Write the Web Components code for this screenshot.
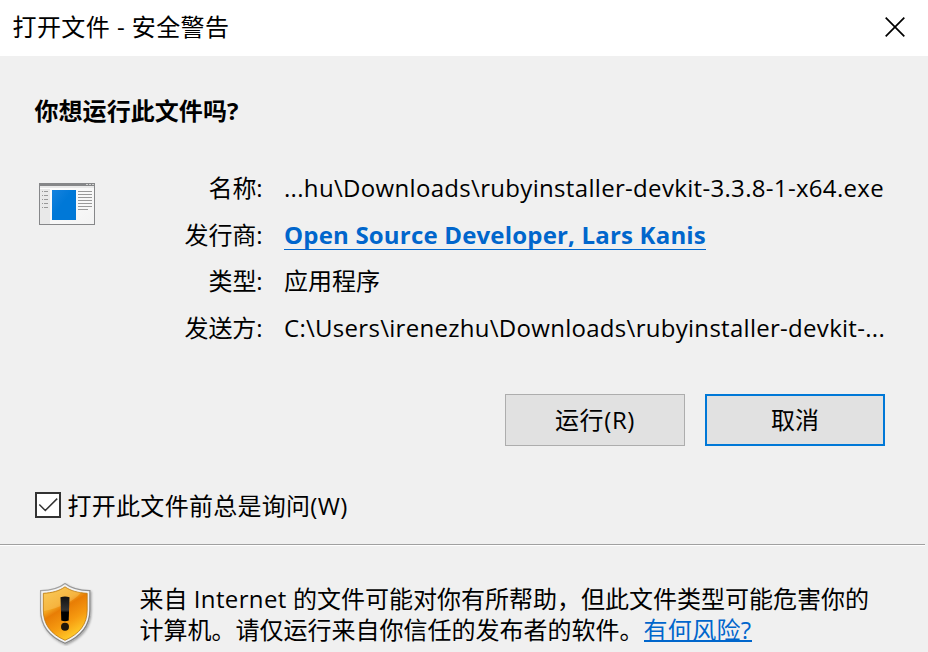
<!DOCTYPE html>
<html lang="zh-CN">
<head>
<meta charset="utf-8">
<title>打开文件 - 安全警告</title>
<style>
html,body{margin:0;height:652px;overflow:hidden;background:#f0f0f0}
body{font:24px/32px "Open Sans","Noto Sans CJK SC",sans-serif;color:#000}
</style>
</head>
<body>
<security-dialog></security-dialog>
<script>
const define = (name, html, setup) => customElements.define(name, class extends HTMLElement {
  connectedCallback() {
    if (this.shadowRoot) return;
    const t = document.createElement('template');
    t.innerHTML = html;
    this.attachShadow({mode: 'open'}).append(t.content.cloneNode(true));
    if (setup) setup(this, this.shadowRoot);
  }
});

/* One line of text, tracked so that it fills the width given in "w". */
define('fit-text', `<style>:host{display:inline-block;white-space:nowrap}span{display:inline-block}</style><span><slot></slot></span>`,
  (el, root) => {
    const s = root.querySelector('span');
    const w = +el.getAttribute('w');
    const n = [...el.textContent].length;
    s.style.letterSpacing = (w - s.getBoundingClientRect().width) / n + 'px';
    el.style.width = w + 'px';
  });

define('title-bar', `<style>
:host{display:flex;height:56px;box-sizing:border-box;background:#fff;padding:0 23px 2px 12.500px;justify-content:space-between;align-items:center}
svg{display:block}</style><slot></slot>
<svg width="20" height="20" viewBox="0 0 20 20" fill="none" stroke="#000" stroke-width="1.7"><path d="M.7.7 19.3 19.3M19.3.7.7 19.3"/></svg>`);

define('app-icon', `<style>:host{display:block;width:56px;height:42px}svg{display:block}</style>
<svg width="56" height="42" viewBox="0 0 56 42">
<defs><linearGradient id="b" x2="1" y2="1"><stop stop-color="#1683df"/><stop offset=".45" stop-color="#0078d7"/></linearGradient>
<linearGradient id="w" x2="1" y2="1"><stop stop-color="#fff"/><stop offset="1" stop-color="#f3f3f3"/></linearGradient></defs>
<path fill="#868789" d="M0 0h56v42H0z"/><path fill="url(#w)" d="M1 3h54v38H1z"/><path fill="#e9e9e9" d="M1 3h54v2H1zM1 6h10v35H1z"/>
<path fill="#d2d2d2" d="M47 1h2v1h-2zM50 1h2v1h-2zM53 1h2v1h-2z"/>
<path fill="url(#b)" d="M13 7h24v30H13z"/>
<path stroke="#999" d="M3 8.5h1m1 0h4M3 12.5h1m1 0h4M3 16.5h1m1 0h4M3 20.5h1m1 0h4M3 24.5h1m1 0h4M39 8.500h14M39 11.500h14M39 14.500h14M39 17.500h14M39 20.500h14M39 23.500h14M39 26.500h10"/>
</svg>`);

define('info-row', `<style>
:host{display:grid;grid-template-columns:167.500px 1fr;column-gap:21.500px;height:46.67px;line-height:46.67px;white-space:nowrap}
.k{text-align:right}</style><div class="k"><slot name="label"></slot></div><div><slot></slot></div>`);

define('link-text', `<style>:host{display:inline-block;color:#0066cc}
:host([strong]){font-weight:700;line-height:29px;border-bottom:1px solid #0066cc}
:host([under]){line-height:20px;border-bottom:2px solid #0066cc}</style><slot></slot>`);

define('dialog-button', `<style>
:host{display:flex;align-items:center;justify-content:center;box-sizing:border-box;width:180px;height:52px;background:#e1e1e1;border:1px solid #adadad}
:host([default]){border:2px solid #0078d7}</style><slot></slot>`);

define('check-box', `<style>:host{display:flex;align-items:center;gap:6.500px;height:32px}
svg{display:block;margin-top:-2px}</style>
<svg width="26" height="26" viewBox="0 0 26 26"><path fill="#fff" stroke="#333" stroke-width="2" d="M1 1h24v24H1z"/><path d="M4.300 12.500 10.300 18.500 22.200 6.600" fill="none" stroke="#333" stroke-width="1.500"/></svg><slot></slot>`);

define('shield-icon', `<style>:host{display:block;width:60px;height:66px}svg{display:block}</style>
<svg width="60" height="66" viewBox="0 0 60 66">
<defs><linearGradient id="g" x2=".5" y2="1"><stop stop-color="#f6c64a"/><stop offset=".4" stop-color="#f3a520"/><stop offset=".5" stop-color="#e87d05"/><stop offset=".75" stop-color="#f69a10"/><stop offset="1" stop-color="#ffc928"/></linearGradient>
<linearGradient id="m" x2="1" y2="1"><stop stop-color="#aaa"/><stop offset="1" stop-color="#777"/></linearGradient>
<linearGradient id="k" x2="0" y2="1"><stop stop-color="#111"/><stop offset=".55" stop-color="#333"/><stop offset=".65" stop-color="#000"/></linearGradient>
<filter id="s" x="-20%" y="-20%" width="150%" height="150%"><feDropShadow dx="1" dy="1.300" stdDeviation="1" flood-opacity=".35"/></filter></defs>
<path filter="url(#s)" fill="#f3f3f3" stroke="url(#m)" stroke-width="1.200" d="M30 3.500C24 8.300 16 10.400 5.600 10.700V30c0 15.500 8.400 26.500 24.400 33.300C46 56.500 54.900 45.500 54.900 30V10.700C44 10.400 36 8.300 30 3.500Z"/>
<path fill="url(#g)" stroke="#b97913" stroke-width=".8" d="M30 6.800C24 11 17.300 12.800 8.300 13.300V30c0 14 7 23.800 21.700 30.300C44.800 53.800 52.200 44 52.200 30V13.300C43 12.800 36 11 30 6.800Z"/>
<path fill="#ffe092" opacity=".28" d="M30 7.500C24 11.700 17.300 13.500 9 14v17c15-3 29-9 37-18.500C40 12 34 10.500 30 7.500Z"/>
<path fill="url(#k)" d="M25.500 17.200q4.500-1.500 9 0l-.8 23.300q-3.700 1.300-7.400 0Z"/><circle cx="30" cy="46.800" r="4" fill="#22170a"/>
</svg>`);

define('security-dialog', `<style>
:host{display:block;width:928px;height:652px;background:#f0f0f0;overflow:hidden}
.ask{padding:39px 0 0 34.500px;font-weight:700}
.info{display:grid;grid-template-columns:56px 1fr;padding:38px 0 0 39px}
app-icon{margin-top:18px}
.btns{display:flex;gap:20px;justify-content:flex-end;padding:42px 43px 0 0}
check-box{margin:44px 0 0 35px}
.line{width:925px;height:1px;background:#a0a0a0;border-bottom:1px solid #fff;margin-top:22px}
.warn{display:grid;grid-template-columns:60px 1fr;column-gap:44.500px;padding:37px 0 0 35px}
shield-icon{margin-top:-3px}
.note{line-height:31px;white-space:nowrap}
.note>div{height:31px}
</style>
<title-bar><fit-text w="217">打开文件 - 安全警告</fit-text></title-bar>
<div class="ask"><fit-text w="204">你想运行此文件吗?</fit-text></div>
<div class="info"><app-icon></app-icon><div>
<info-row><fit-text slot="label" w="54">名称:</fit-text><fit-text w="600">...hu\\Downloads\\rubyinstaller-devkit-3.3.8-1-x64.exe</fit-text></info-row>
<info-row><fit-text slot="label" w="78">发行商:</fit-text><link-text strong><fit-text w="422">Open Source Developer, Lars Kanis</fit-text></link-text></info-row>
<info-row><fit-text slot="label" w="54">类型:</fit-text><fit-text w="96">应用程序</fit-text></info-row>
<info-row><fit-text slot="label" w="78">发送方:</fit-text><fit-text w="601">C:\\Users\\irenezhu\\Downloads\\rubyinstaller-devkit-...</fit-text></info-row>
</div></div>
<div class="btns"><dialog-button><fit-text w="80">运行(R)</fit-text></dialog-button><dialog-button default><fit-text w="48">取消</fit-text></dialog-button></div>
<check-box><fit-text w="280">打开此文件前总是询问(W)</fit-text></check-box>
<div class="line"></div>
<div class="warn"><shield-icon></shield-icon><div class="note"><div><fit-text w="48">来自</fit-text> <fit-text w="93">Internet</fit-text> <fit-text w="576">的文件可能对你有所帮助，但此文件类型可能危害你的</fit-text></div><div><fit-text w="504">计算机。请仅运行来自你信任的发布者的软件。</fit-text><link-text under><fit-text w="108">有何风险?</fit-text></link-text></div></div></div>`);
</script>
</body>
</html>
